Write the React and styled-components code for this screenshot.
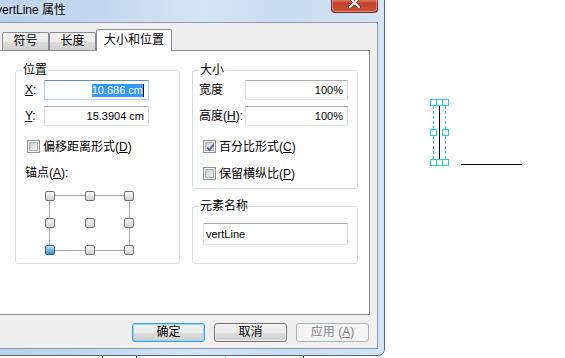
import React from "react";
import styled, { createGlobalStyle, css } from "styled-components";

const UI = `"Liberation Sans", "Noto Sans CJK SC", sans-serif`;

const Global = createGlobalStyle`
  html, body { margin: 0; padding: 0; background: #fff; }
  body { font-family: ${UI}; }
`;

const Desktop = styled.div`
  position: relative;
  width: 565px;
  height: 358px;
  overflow: hidden;
  background: #fff;
`;

const Drawing = styled.svg`
  position: absolute;
  left: 0;
  top: 0;
`;

const Window = styled.div`
  position: absolute;
  left: -20px;
  top: -9px;
  width: 405px;
  height: 365px;
  box-sizing: border-box;
  border: 1px solid #56677b;
  border-radius: 7px;
  background: linear-gradient(90deg, #b8d0ea 0%, #c4d9ef 30%, #d4e5f6 55%, #c8dcf1 75%, #d2e4f6 100%);
  display: flex;
  flex-direction: column;
  padding: 0 6px 6px 0;
`;

const TitleBar = styled.div`
  height: 30px;
  flex: none;
  display: flex;
  align-items: flex-start;
  justify-content: space-between;
`;

const TitleText = styled.div`
  margin: 10px 0 0 15px;
  font-family: ${UI};
  font-size: 12px;
  line-height: 16px;
  color: #000;
  text-shadow: 0 0 6px rgba(255, 255, 255, 0.9);
`;

const CloseButton = styled.div`
  width: 47px;
  height: 21px;
  box-sizing: border-box;
  border: 1px solid #6d2a20;
  border-top: none;
  border-radius: 0 0 4px 4px;
  background: linear-gradient(180deg, #e9a796 0%, #d86a56 45%, #c13f28 55%, #c9543c 100%);
  box-shadow: inset 0 0 0 1px rgba(255, 200, 190, 0.5);
  display: flex;
  align-items: center;
  justify-content: center;
`;

const Client = styled.div`
  flex: 1;
  box-sizing: border-box;
  border: 1px solid #8598ae;
  background: #f0f0f0;
  padding: 6px 0 0 18px;
  display: flex;
  flex-direction: column;
`;

const TabControl = styled.div`
  margin-left: -1px;
  width: 371px;
`;

const TabStrip = styled.div`
  display: flex;
  align-items: flex-end;
  height: 21px;
  padding-left: 3px;
`;

const Tab = styled.div`
  box-sizing: border-box;
  width: ${(p) => p.$w}px;
  height: 18px;
  border: 1px solid #898c95;
  border-bottom: none;
  border-radius: 2px 2px 0 0;
  background: linear-gradient(180deg, #f3f3f3 0%, #ebebeb 50%, #dddddd 51%, #cfcfcf 100%);
  font-size: 12px;
  line-height: 17px;
  text-align: center;
  color: #000;
  ${(p) =>
    p.$active &&
    css`
      position: relative;
      z-index: 1;
      height: 22px;
      margin-bottom: -1px;
      background: #fff;
      line-height: 21px;
    `}
`;

const Page = styled.div`
  box-sizing: border-box;
  height: 265px;
  border: 1px solid #898c95;
  background: #fff;
  display: flex;
  gap: 12px;
  padding: 19px 0 0 15px;
`;

const Group = styled.div`
  position: relative;
  box-sizing: border-box;
  width: ${(p) => p.$w}px;
  height: ${(p) => p.$h}px;
  border: 1px solid #d5dfe5;
  border-radius: 3px;
  padding: ${(p) => p.$pad};
  display: flex;
  flex-direction: column;
  align-items: flex-start;
`;

const Legend = styled.div`
  position: absolute;
  top: -9px;
  left: 6px;
  padding: 0 1px;
  background: #fff;
  font-size: 12px;
  line-height: 16px;
  color: #000;
`;

const Column = styled.div`
  display: flex;
  flex-direction: column;
  gap: 17px;
`;

const FieldRow = styled.div`
  display: flex;
  align-items: center;
  height: 20px;
  margin-top: ${(p) => p.$mt || 0}px;
`;

const Label = styled.div`
  width: ${(p) => p.$w}px;
  font-size: 12px;
  line-height: 16px;
  color: #000;
  white-space: nowrap;
`;

const Key = styled.span`
  text-decoration: underline;
`;

const Field = styled.div`
  box-sizing: border-box;
  width: ${(p) => p.$w}px;
  height: ${(p) => p.$h || 20}px;
  border: 1px solid;
  border-color: #abadb3 #dbdfe6 #e3e9ef #e2e3ea;
  background: #fff;
  display: flex;
  align-items: center;
  justify-content: ${(p) => (p.$left ? "flex-start" : "flex-end")};
  padding: ${(p) => (p.$left ? "0 0 0 2px" : "0 4px 0 0")};
  font-family: "Liberation Sans", sans-serif;
  font-size: 11px;
  color: #000;
  white-space: pre;
  ${(p) =>
    p.$focus &&
    css`
      border-color: #5b8fc0 #a9cbe6 #b9d9ee #a9cbe6;
    `}
`;

const Selected = styled.span`
  background: #3399ff;
  color: #fff;
  line-height: 13px;
`;

const Caret = styled.span`
  display: inline-block;
  width: 1px;
  height: 13px;
  background: #000;
`;

const CheckRow = styled.div`
  display: flex;
  align-items: center;
  gap: 3px;
  height: 13px;
  margin-top: ${(p) => p.$mt}px;
  margin-left: ${(p) => p.$ml}px;
  font-size: 12px;
  line-height: 16px;
  color: #000;
  white-space: nowrap;
`;

const Box = styled.span`
  position: relative;
  box-sizing: border-box;
  width: 13px;
  height: 13px;
  flex: none;
  border: 1px solid #8e8f8f;
  background: #fff;
  &::after {
    content: "";
    position: absolute;
    left: 1px;
    top: 1px;
    right: 1px;
    bottom: 1px;
    box-sizing: border-box;
    border: 1px solid #aeb3b9;
    background: linear-gradient(135deg, #c9ced4 0%, #e2e4e7 60%, #f4f4f4 100%);
  }
  & > svg {
    position: absolute;
    left: 0;
    top: 0;
    z-index: 1;
  }
`;

const AnchorLabel = styled.div`
  margin-top: 12px;
  font-size: 12px;
  line-height: 16px;
  color: #000;
`;

const AnchorGrid = styled.div`
  position: relative;
  margin: 10px 0 0 20px;
  width: 89px;
  height: 64px;
  display: grid;
  grid-template-columns: repeat(3, 10px);
  grid-template-rows: repeat(3, 10px);
  justify-content: space-between;
  align-content: space-between;
  &::before {
    content: "";
    position: absolute;
    left: 4px;
    top: 4px;
    right: 4px;
    bottom: 4px;
    border: 1px solid #a6a6a6;
  }
`;

const Handle = styled.div`
  position: relative;
  z-index: 1;
  box-sizing: border-box;
  width: 10px;
  height: 10px;
  border: 1px solid #727272;
  border-radius: 2px;
  background: linear-gradient(180deg, #fafafa 0%, #e6e6e6 50%, #d2d2d2 100%);
  ${(p) =>
    p.$on &&
    css`
      border-color: #2c5f88;
      background: linear-gradient(180deg, #c4e4f7 0%, #78b9e3 50%, #3f8ecb 100%);
    `}
`;

const ButtonRow = styled.div`
  display: flex;
  justify-content: flex-end;
  gap: 9px;
  margin: 8px 0 0 -1px;
  width: 370px;
`;

const Button = styled.div`
  box-sizing: border-box;
  width: 73px;
  height: 19px;
  border: 1px solid #707070;
  border-radius: 3px;
  background: linear-gradient(180deg, #f2f2f2 0%, #ebebeb 50%, #dddddd 51%, #cfcfcf 100%);
  box-shadow: inset 0 0 0 1px rgba(255, 255, 255, 0.7);
  font-size: 12px;
  line-height: 17px;
  text-align: center;
  color: #000;
  ${(p) =>
    p.$default &&
    css`
      border-color: #3c9fd6;
      box-shadow: inset 0 0 0 1px #8fd8f6;
    `}
  ${(p) =>
    p.$disabled &&
    css`
      border-color: #adb2b5;
      background: #f4f4f4;
      box-shadow: none;
      color: #838383;
    `}
`;

function Check({ checked, children, mt, ml }) {
  return (
    <CheckRow $mt={mt} $ml={ml}>
      <Box>
        {checked && (
          <svg width="13" height="13" viewBox="0 0 13 13">
            <path d="M3.2 6.6 L5.4 9 L9.8 3.4" fill="none" stroke="#4a5f97" strokeWidth="1.8" />
          </svg>
        )}
      </Box>
      <span>{children}</span>
    </CheckRow>
  );
}

export default function App() {
  const cyan = "#1fcfd2";
  return (
    <>
      <Global />
      <Desktop>
        <Drawing width="565" height="358" viewBox="0 0 565 358">
          <line x1="439.5" y1="105" x2="439.5" y2="159" stroke="#000" strokeWidth="1" />
          <line x1="433.5" y1="106" x2="433.5" y2="159" stroke={cyan} strokeDasharray="3 2" />
          <line x1="445.5" y1="106" x2="445.5" y2="159" stroke={cyan} strokeDasharray="3 2" />
          {[430.5, 436.5, 442.5].map((x) => (
            <rect key={"t" + x} x={x} y="99.5" width="6" height="6" fill="#fff" stroke={cyan} />
          ))}
          {[430.5, 442.5].map((x) => (
            <rect key={"m" + x} x={x} y="129.5" width="6" height="6" fill="#fff" stroke={cyan} />
          ))}
          {[430.5, 436.5, 442.5].map((x) => (
            <rect key={"b" + x} x={x} y="159.5" width="6" height="6" fill="#fff" stroke={cyan} />
          ))}
          <line x1="461" y1="164.5" x2="522" y2="164.5" stroke="#000" strokeWidth="1" />
          <line x1="102.5" y1="350" x2="102.5" y2="358" stroke="#000" />
          <line x1="136.5" y1="350" x2="136.5" y2="358" stroke="#000" />
          <line x1="225.5" y1="350" x2="225.5" y2="358" stroke="#9fe3e3" />
          <line x1="303.5" y1="350" x2="303.5" y2="358" stroke="#000" />
        </Drawing>
        <Window>
          <TitleBar>
            <TitleText>vertLine 属性</TitleText>
            <CloseButton>
              <svg width="13" height="11" viewBox="0 0 13 11">
                <path d="M2 1 L11 10 M11 1 L2 10" stroke="#5a1e16" strokeWidth="3.6" strokeLinecap="round" />
                <path d="M2 1 L11 10 M11 1 L2 10" stroke="#fff" strokeWidth="2.2" strokeLinecap="round" />
              </svg>
            </CloseButton>
          </TitleBar>
          <Client>
            <TabControl>
              <TabStrip>
                <Tab $w={47}>符号</Tab>
                <Tab $w={47}>长度</Tab>
                <Tab $w={76} $active>大小和位置</Tab>
              </TabStrip>
              <Page>
                <Group $w={165} $h={194} $pad="9px 0 0 9px">
                  <Legend>位置</Legend>
                  <FieldRow>
                    <Label $w={19}><Key>X</Key>:</Label>
                    <Field $w={105} $focus>
                      <Selected>10.686 cm</Selected>
                      <Caret />
                    </Field>
                  </FieldRow>
                  <FieldRow $mt={6}>
                    <Label $w={19}><Key>Y</Key>:</Label>
                    <Field $w={105}>15.3904 cm</Field>
                  </FieldRow>
                  <Check mt={14} ml={2}>
                    偏移距离形式(<Key>D</Key>)
                  </Check>
                  <AnchorLabel>
                    锚点(<Key>A</Key>):
                  </AnchorLabel>
                  <AnchorGrid>
                    <Handle />
                    <Handle />
                    <Handle />
                    <Handle />
                    <Handle />
                    <Handle />
                    <Handle $on />
                    <Handle />
                    <Handle />
                  </AnchorGrid>
                </Group>
                <Column>
                  <Group $w={166} $h={119} $pad="9px 0 0 6px">
                    <Legend>大小</Legend>
                    <FieldRow>
                      <Label $w={46}>宽度</Label>
                      <Field $w={103}>100%</Field>
                    </FieldRow>
                    <FieldRow $mt={6}>
                      <Label $w={46}>
                        高度(<Key>H</Key>):
                      </Label>
                      <Field $w={103}>100%</Field>
                    </FieldRow>
                    <Check checked mt={14} ml={4}>
                      百分比形式(<Key>C</Key>)
                    </Check>
                    <Check mt={14} ml={4}>
                      保留横纵比(<Key>P</Key>)
                    </Check>
                  </Group>
                  <Group $w={166} $h={58} $pad="16px 0 0 10px">
                    <Legend>元素名称</Legend>
                    <Field $w={145} $h={22} $left>
                      vertLine
                    </Field>
                  </Group>
                </Column>
              </Page>
            </TabControl>
            <ButtonRow>
              <Button $default>确定</Button>
              <Button>取消</Button>
              <Button $disabled>
                应用 (<Key>A</Key>)
              </Button>
            </ButtonRow>
          </Client>
        </Window>
      </Desktop>
    </>
  );
}
